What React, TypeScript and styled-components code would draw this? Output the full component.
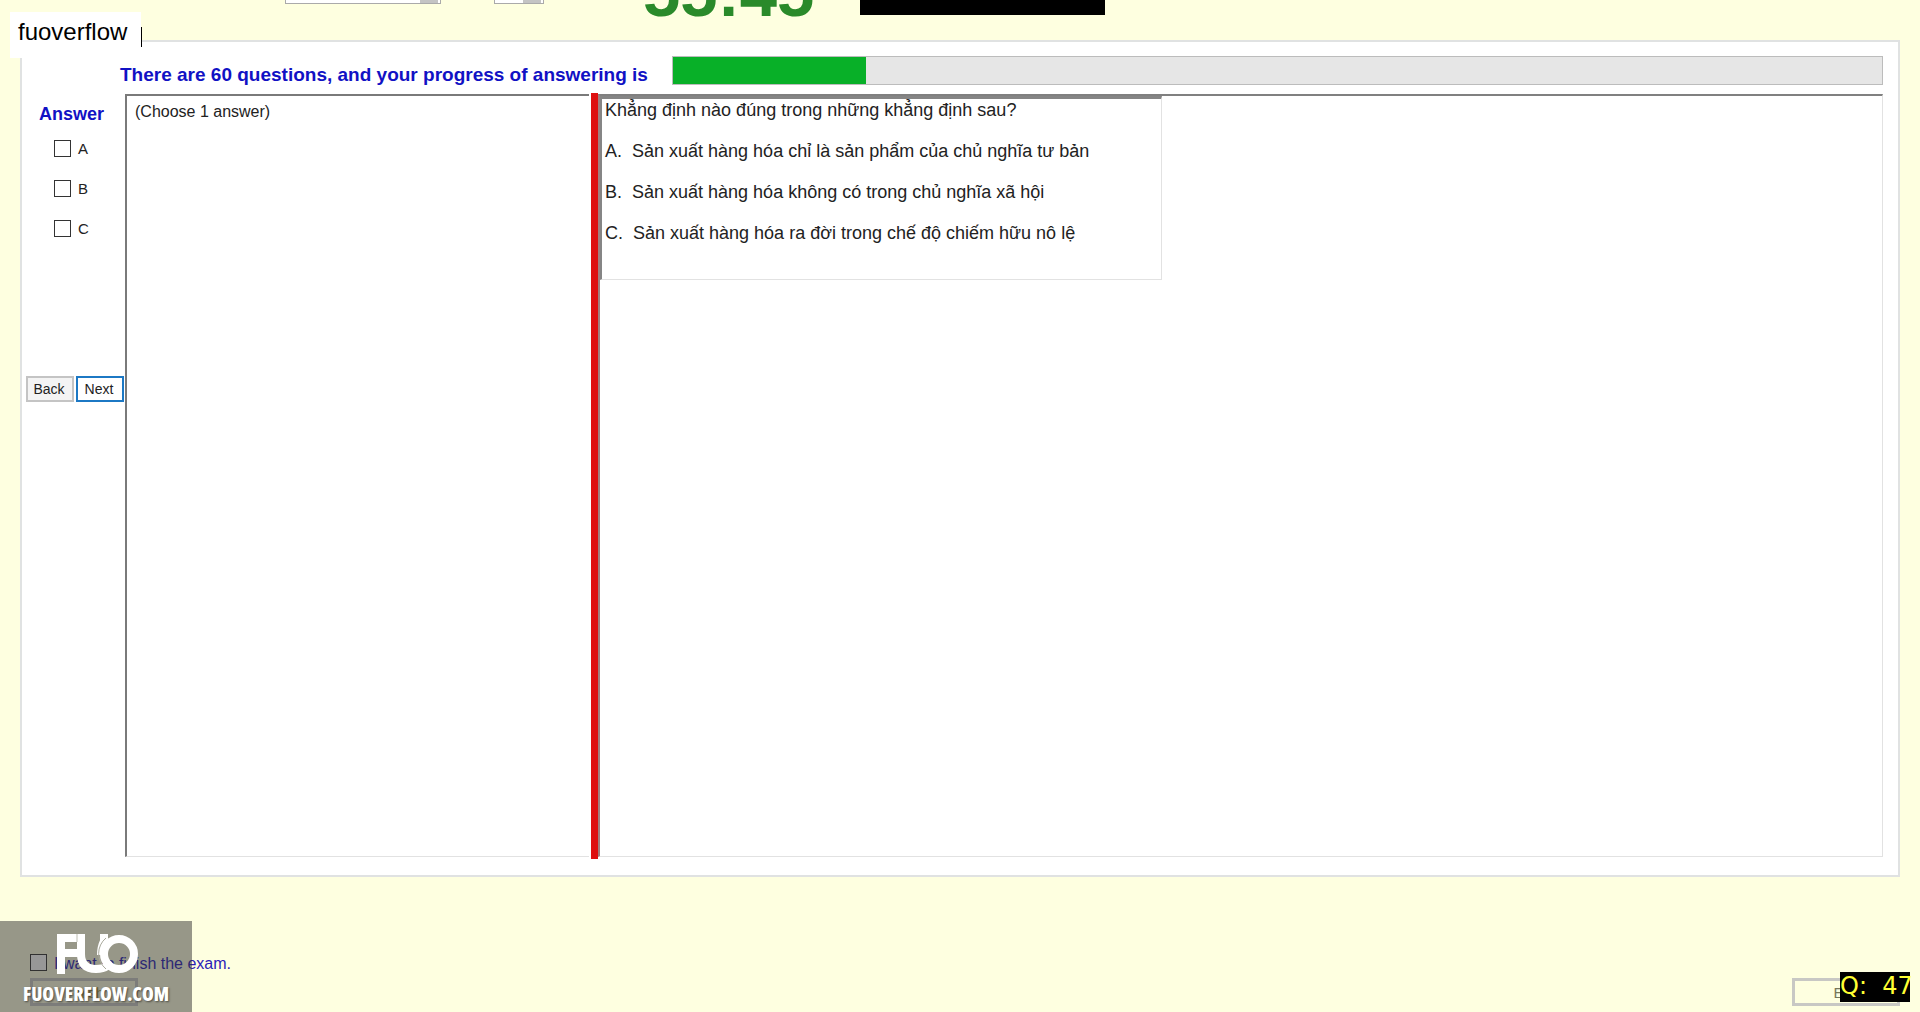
import React from "react";
import styled, { createGlobalStyle } from "styled-components";

const Global = createGlobalStyle`
  * { box-sizing: border-box; }
  body { margin: 0; background: #feffe0; color: #222; font-family: "Liberation Sans", Arial, sans-serif; }
  html, body, #root { height: 100%; }
`;

const Page = styled.div`
  position: relative;
  display: flex;
  flex-direction: column;
  height: 100vh;
  min-height: 600px;
  overflow: hidden;
`;

const TopBar = styled.header`
  display: flex;
  align-items: flex-end;
  height: 16px;
  padding-left: 285px;
  flex: none;
`;

const Picker = styled.select<{ $width: number; $gap: number }>`
  appearance: none;
  align-self: flex-start;
  width: ${(p) => p.$width}px;
  height: 24px;
  margin-top: -20px;
  margin-right: ${(p) => p.$gap}px;
  border: 1px solid #aaa;
  border-radius: 0;
  background: linear-gradient(#c4c4c4, #c4c4c4) right 2px top 0 / 18px 22px no-repeat #fff;
`;

const Timer = styled.time`
  width: 217px;
  font-size: 67px;
  line-height: 46px;
  font-weight: bold;
  color: #2a8a2a;
`;

const Blackout = styled.div`
  width: 245px;
  height: 15px;
  align-self: flex-start;
  background: #000;
`;

const Panel = styled.main`
  flex: 1;
  display: flex;
  flex-direction: column;
  margin: 24px 20px 0;
  padding: 13px 15px 18px 4px;
  border: 2px solid #e0e2e2;
  background: #fff;
`;

const ProgressRow = styled.div`
  display: flex;
  align-items: center;
  gap: 24px;
  padding-left: 94px;
  margin-bottom: 9px;
`;

const Heading = styled.span`
  padding-top: 10px;
  font-size: 19px;
  line-height: 20px;
  font-weight: bold;
  color: #1111c4;
  white-space: nowrap;
`;

const Track = styled.div`
  flex: 1;
  height: 29px;
  border: 1px solid #bcbcbc;
  background: #e6e6e6;
`;

const Fill = styled.div`
  height: 100%;
  background: #08b028;
`;

const Columns = styled.div`
  flex: 1;
  display: flex;
`;

const AnswerColumn = styled.form`
  width: 99px;
  display: flex;
  flex-direction: column;
`;

const AnswerTitle = styled.h2`
  margin: 10px 0 14px 13px;
  font-size: 18px;
  line-height: 20px;
  color: #1111c4;
`;

const Option = styled.label`
  display: flex;
  align-items: center;
  gap: 7px;
  height: 20px;
  margin: 0 0 20px 28px;
  font-size: 15px;
`;

const Tick = styled.input`
  appearance: none;
  width: 17px;
  height: 17px;
  margin: 0;
  border: 1px solid #333;
  background: #fff;
`;

const NavRow = styled.div`
  display: flex;
  gap: 2px;
  margin-top: 118px;
`;

const NavButton = styled.button<{ $active?: boolean }>`
  width: 48px;
  height: 26px;
  padding: 0 2px 0 0;
  border: 2px solid ${(p) => (p.$active ? "#1c78c4" : "#c4c4c4")};
  background: ${(p) => (p.$active ? "#fff" : "#f4f4f4")};
  font-family: inherit;
  font-size: 14px;
  color: #222;
`;

const Notes = styled.section`
  width: 464px;
  padding: 6px 8px;
  border: solid #7a7a7a;
  border-width: 2px 0 0 2px;
  border-bottom: 1px solid #e2e2e2;
  font-size: 16px;
  line-height: 20px;
`;

const Divider = styled.div`
  width: 7px;
  margin: -1px 0 -2px 2px;
  background: #de1010;
`;

const Viewer = styled.section`
  flex: 1;
  border: 1px solid #e2e2e2;
  border-top: 2px solid #808080;
  border-left: 2px solid #a08080;
`;

const Question = styled.article`
  width: 562px;
  height: 184px;
  padding: 1px 0 0 3px;
  border: 1px solid #e2e2e2;
  border-top: 3px solid #858585;
  border-left: 2px solid #858585;
  font-size: 18px;
  line-height: 21px;
`;

const Line = styled.p`
  margin: 0 0 20px;
  white-space: pre;
`;

const Footer = styled.footer`
  flex: none;
  display: flex;
  justify-content: space-between;
  align-items: flex-end;
  height: 135px;
  padding: 0 20px 6px 30px;
`;

const FinishGroup = styled.div`
  display: flex;
  flex-direction: column;
  gap: 4px;
`;

const FinishLabel = styled.label`
  display: flex;
  align-items: center;
  gap: 7px;
  font-size: 16px;
  line-height: 20px;
  color: #2a1cb8;
`;

const FinishText = styled.span`
  padding-top: 4px;
`;

const FlatButton = styled.button<{ $ink: string }>`
  width: 108px;
  height: 28px;
  padding: 0;
  border: 3px solid #c8c8c4;
  background: #feffe0;
  font-family: inherit;
  font-size: 15px;
  color: ${(p) => p.$ink};
`;

const NameTag = styled.div`
  position: absolute;
  left: 10px;
  top: 12px;
  width: 131px;
  height: 46px;
  padding: 6px 8px;
  background: #fff;
  font-size: 24px;
  line-height: 28px;
  color: #000;
`;

const Caret = styled.span`
  position: absolute;
  left: 131px;
  top: 15px;
  width: 1px;
  height: 20px;
  background: #000;
`;

const Watermark = styled.div`
  position: absolute;
  left: 0;
  bottom: 0;
  width: 192px;
  height: 91px;
  background: rgba(48, 48, 48, 0.5);
  display: flex;
  flex-direction: column;
  align-items: center;
  padding-top: 12px;
`;

const Site = styled.span`
  margin-top: 7px;
  font-family: "Open Sans", "Liberation Sans", sans-serif;
  font-stretch: condensed;
  font-size: 19px;
  line-height: 24px;
  font-weight: 800;
  color: #fff;
  text-shadow: 1px 1px 2px rgba(0, 0, 0, 0.5);
`;

const Counter = styled.output`
  position: absolute;
  right: 10px;
  bottom: 10px;
  width: 70px;
  height: 30px;
  background: #000;
  color: #ffff33;
  font-family: "DejaVu Sans", sans-serif;
  font-size: 24px;
  line-height: 28px;
  white-space: pre;
`;

const lines = [
  "Khẳng định nào đúng trong những khẳng định sau?",
  "A.  Sản xuất hàng hóa chỉ là sản phẩm của chủ nghĩa tư bản",
  "B.  Sản xuất hàng hóa không có trong chủ nghĩa xã hội",
  "C.  Sản xuất hàng hóa ra đời trong chế độ chiếm hữu nô lệ",
];

export default function App() {
  const progress = 16;
  return (
    <Page>
      <Global />
      <TopBar>
        <Picker $width={156} $gap={53} aria-label="Font" />
        <Picker $width={50} $gap={99} aria-label="Size" />
        <Timer>55:45</Timer>
        <Blackout />
      </TopBar>
      <Panel>
        <ProgressRow>
          <Heading id="progress">There are 60 questions, and your progress of answering is</Heading>
          <Track role="progressbar" aria-labelledby="progress" aria-valuenow={progress}>
            <Fill style={{ width: `${progress}%` }} />
          </Track>
        </ProgressRow>
        <Columns>
          <AnswerColumn>
            <AnswerTitle>Answer</AnswerTitle>
            {["A", "B", "C"].map((o) => (
              <Option key={o}>
                <Tick type="checkbox" />
                {o}
              </Option>
            ))}
            <NavRow>
              <NavButton type="button">Back</NavButton>
              <NavButton type="button" $active>Next</NavButton>
            </NavRow>
          </AnswerColumn>
          <Notes>(Choose 1 answer)</Notes>
          <Divider />
          <Viewer>
            <Question>
              {lines.map((l) => (
                <Line key={l}>{l}</Line>
              ))}
            </Question>
          </Viewer>
        </Columns>
      </Panel>
      <Footer>
        <FinishGroup>
          <FinishLabel>
            <Tick type="checkbox" />
            <FinishText>I want to finish the exam.</FinishText>
          </FinishLabel>
          <FlatButton type="button" $ink="#b0a850">Finish</FlatButton>
        </FinishGroup>
        <FlatButton type="button" $ink="#77775a">Exit</FlatButton>
      </Footer>
      <NameTag>
        fuoverflow
        <Caret />
      </NameTag>
      <Watermark>
        <svg width="84" height="42" viewBox="0 0 84 42" fill="none" stroke="#fff" strokeWidth="8" role="img" aria-label="FUO">
          <path d="M7 41V5H23M7 20H24" />
          <path d="M27 1V21Q27 36 42 36Q49 36 53 33M50 1V8Q47 14 47 22" />
          <path d="M23 1V9" stroke="#bdbdb2" strokeWidth="1" />
          <path d="M52 5A20 20 0 0 0 52 36" stroke="#a9a99c" strokeWidth="1" />
          <circle cx="65" cy="21" r="15" />
        </svg>
        <Site>FUOVERFLOW.COM</Site>
      </Watermark>
      <Counter>Q:  47</Counter>
    </Page>
  );
}
